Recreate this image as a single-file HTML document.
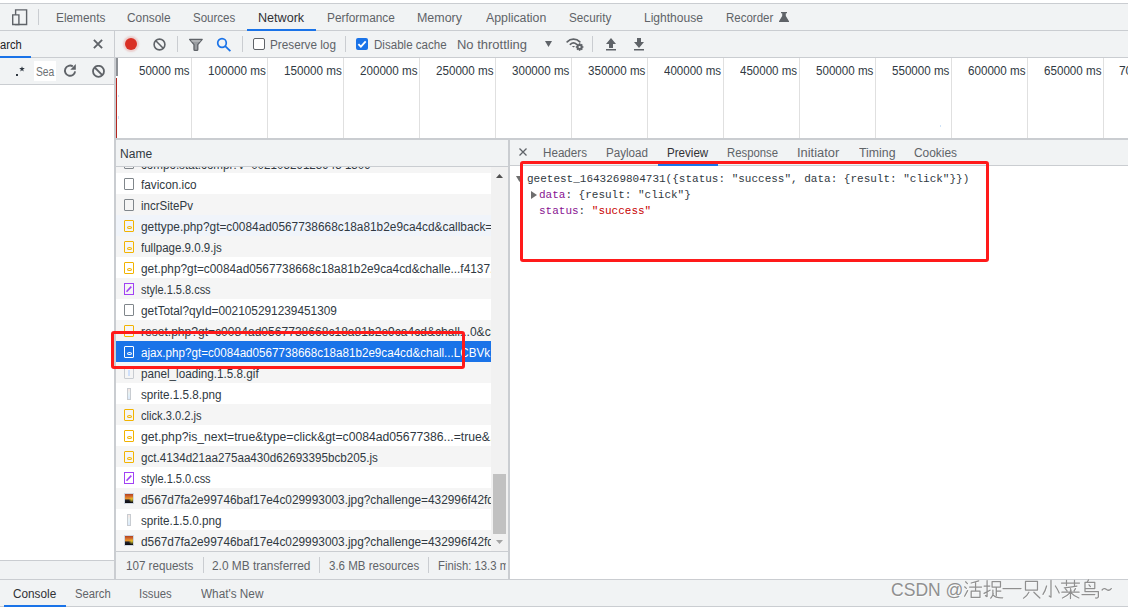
<!DOCTYPE html>
<html><head><meta charset="utf-8">
<style>
*{margin:0;padding:0;box-sizing:border-box}
html,body{width:1128px;height:608px;overflow:hidden;background:#fff;position:relative;font-family:"Liberation Sans",sans-serif;font-size:12px;color:#303942}
.a{position:absolute}
.t{position:absolute;white-space:nowrap;line-height:14px;height:14px}
.bar{background:#f1f3f4}
.vl{position:absolute;width:1px;background:#cacdd1}
.mono{font-family:"Liberation Mono",monospace;font-size:11px}
.row{position:absolute;left:0;width:375px;height:21px}
.ic{position:absolute;left:8px;top:5px;width:10px;height:12px;border:1px solid #80868b;border-radius:1px}
.ov{position:absolute;left:1.5px;top:5px;width:5px;height:3px;border:1px solid #f2b300;border-radius:50%}
.gl{position:absolute;top:58px;width:1px;height:80px;background:#e0e0e0}
</style></head><body>
<div class="a bar" style="left:0;top:3px;width:1128px;height:28px;border-top:1px solid #cacdd1;border-bottom:1px solid #cacdd1"></div>
<svg class="a" style="left:10px;top:8px" width="20" height="20" viewBox="0 0 20 20"><path d="M5.6 1.9h11v14.6h-11z" fill="none" stroke="#5f6368" stroke-width="1.4"/><path d="M2.7 6.9h6.2v9.6h-6.2z" fill="#f1f3f4" stroke="#5f6368" stroke-width="1.4"/></svg>
<div class="vl" style="left:38px;top:9px;height:16px"></div>
<div class="t" style="left:55.51px;top:11px;color:#5f6368;font-size:12px;transform:scaleX(0.9866);transform-origin:0 0;">Elements</div>
<div class="t" style="left:127.21px;top:11px;color:#5f6368;font-size:12px;transform:scaleX(0.9907);transform-origin:0 0;">Console</div>
<div class="t" style="left:192.87px;top:11px;color:#5f6368;font-size:12px;transform:scaleX(0.9605);transform-origin:0 0;">Sources</div>
<div class="t" style="left:257.65px;top:11px;color:#303134;font-size:12px;transform:scaleX(1.0488);transform-origin:0 0;">Network</div>
<div class="t" style="left:327.01px;top:11px;color:#5f6368;font-size:12px;transform:scaleX(0.9873);transform-origin:0 0;">Performance</div>
<div class="t" style="left:416.86px;top:11px;color:#5f6368;font-size:12px;transform:scaleX(1.0378);transform-origin:0 0;">Memory</div>
<div class="t" style="left:485.95px;top:11px;color:#5f6368;font-size:12px;transform:scaleX(1.0276);transform-origin:0 0;">Application</div>
<div class="t" style="left:569.06px;top:11px;color:#5f6368;font-size:12px;transform:scaleX(0.9754);transform-origin:0 0;">Security</div>
<div class="t" style="left:644.00px;top:11px;color:#5f6368;font-size:12px;transform:scaleX(1.0035);transform-origin:0 0;">Lighthouse</div>
<div class="t" style="left:726.24px;top:11px;color:#5f6368;font-size:12px;transform:scaleX(0.9574);transform-origin:0 0;">Recorder</div>
<div class="a" style="left:247px;top:29px;width:69px;height:2px;background:#1a73e8"></div>
<svg class="a" style="left:779px;top:12px" width="10" height="10" viewBox="0 0 10 10"><path d="M2 0h6v1.3h-1.2v2.6l3.2 5.3v0.8h-10v-0.8l3.2-5.3v-2.6h-1.2z" fill="#5f6368"/></svg>
<div class="a bar" style="left:0;top:31px;width:1128px;height:27px;border-bottom:1px solid #cacdd1"></div>
<div class="vl" style="left:114px;top:31px;height:27px"></div>
<div class="t" style="left:-0.46px;top:38px;color:#202124;font-size:12px;transform:scaleX(0.9297);transform-origin:0 0;">arch</div>
<div class="a" style="left:0;top:56px;width:31px;height:2px;background:#1a73e8"></div>
<svg class="a" style="left:93px;top:39px" width="10" height="10" viewBox="0 0 10 10"><path d="M0.9 0.9L9.1 9.1M9.1 0.9L0.9 9.1" stroke="#5f6368" stroke-width="1.9"/></svg>
<div class="a" style="left:125px;top:38px;width:12px;height:12px;border-radius:50%;background:#d93025;box-shadow:0 0 1.5px 2px rgba(217,48,37,.18)"></div>
<svg class="a" style="left:153px;top:38px" width="13" height="13" viewBox="0 0 13 13"><circle cx="6.5" cy="6.5" r="5.4" fill="none" stroke="#5f6368" stroke-width="1.6"/><path d="M2.8 2.8L10.2 10.2" stroke="#5f6368" stroke-width="1.6"/></svg>
<div class="vl" style="left:177px;top:36px;height:16px"></div>
<svg class="a" style="left:188px;top:38px" width="16" height="14" viewBox="0 0 16 14"><path d="M1.6 1.4h12.6l-4.4 5.3v4.8q0 .9-.9.9h-2q-.9 0-.9-.9v-4.8z" fill="#9a9da1" stroke="#5f6368" stroke-width="1.3" stroke-linejoin="round"/><path d="M3 2.6h9.8l-0.8 1h-8.2z" fill="#c4c7ca"/></svg>
<svg class="a" style="left:216px;top:37px" width="15" height="15" viewBox="0 0 15 15"><circle cx="6" cy="6" r="4.3" fill="none" stroke="#1a73e8" stroke-width="1.7"/><path d="M9.2 9.2L14.4 14.2" stroke="#1a73e8" stroke-width="1.8"/></svg>
<div class="vl" style="left:242px;top:36px;height:16px"></div>
<div class="a" style="left:253px;top:38px;width:12px;height:12px;border:1px solid #5f6368;border-radius:2px;background:#fff"></div>
<div class="t" style="left:270.32px;top:38px;color:#5f6368;font-size:12px;transform:scaleX(0.9787);transform-origin:0 0;">Preserve log</div>
<div class="vl" style="left:345px;top:36px;height:16px"></div>
<svg class="a" style="left:356px;top:38px" width="12" height="12" viewBox="0 0 12 12"><rect width="12" height="12" rx="2" fill="#1a73e8"/><path d="M2.4 6.1l2.5 2.6 4.8-5.3" fill="none" stroke="#fff" stroke-width="1.8"/></svg>
<div class="t" style="left:373.64px;top:38px;color:#5f6368;font-size:12px;transform:scaleX(0.9641);transform-origin:0 0;">Disable cache</div>
<div class="t" style="left:456.62px;top:38px;color:#5f6368;font-size:12px;transform:scaleX(1.0818);transform-origin:0 0;">No throttling</div>
<svg class="a" style="left:545px;top:41px" width="7" height="6" viewBox="0 0 7 6"><path d="M0 0h7l-3.5 6z" fill="#5f6368"/></svg>
<svg class="a" style="left:566px;top:36px" width="18" height="16" viewBox="0 0 18 16"><path d="M1.2 5.8A8.6 8.6 0 0 1 13.8 5.8" fill="none" stroke="#5f6368" stroke-width="1.7" stroke-linecap="round"/><path d="M4.3 8.3A5 5 0 0 1 10.7 8.3" fill="none" stroke="#5f6368" stroke-width="1.7" stroke-linecap="round"/><path d="M5.9 9.9h3.2L7.5 11.5z" fill="#5f6368"/><circle cx="13.6" cy="11.0" r="2.9" fill="#5f6368"/><rect x="12.80" y="7.20" width="1.6" height="7.6" transform="rotate(0 13.6 11.0)" fill="#5f6368"/><rect x="12.80" y="7.20" width="1.6" height="7.6" transform="rotate(45 13.6 11.0)" fill="#5f6368"/><rect x="12.80" y="7.20" width="1.6" height="7.6" transform="rotate(90 13.6 11.0)" fill="#5f6368"/><rect x="12.80" y="7.20" width="1.6" height="7.6" transform="rotate(135 13.6 11.0)" fill="#5f6368"/><circle cx="13.6" cy="11.0" r="1.1" fill="#f1f3f4"/></svg>
<div class="vl" style="left:592px;top:36px;height:16px"></div>
<svg class="a" style="left:605px;top:37px" width="12" height="14" viewBox="0 0 12 14"><path d="M6 1L11 7h-3v4h-4v-4h-3z" fill="#5f6368"/><rect x="1" y="12" width="10" height="1.5" fill="#5f6368"/></svg>
<svg class="a" style="left:633px;top:37px" width="12" height="14" viewBox="0 0 12 14"><path d="M6 11L11 5h-3v-4h-4v4h-3z" fill="#5f6368"/><rect x="1" y="12" width="10" height="1.5" fill="#5f6368"/></svg>
<div class="a bar" style="left:0;top:58px;width:114px;height:27px;border-bottom:1px solid #cacdd1"></div>
<div class="a" style="left:16px;top:74px;width:2px;height:2px;background:#303942"></div>
<svg class="a" style="left:19px;top:66px" width="6" height="6" viewBox="0 0 6 6"><path d="M3 0.2L3.7 2.1L5.8 2.1L4.1 3.4L4.8 5.5L3 4.2L1.2 5.5L1.9 3.4L0.2 2.1L2.3 2.1z" fill="#303942"/></svg>
<div class="a" style="left:34px;top:61px;width:22px;height:20px;background:#fff"></div>
<div class="t" style="left:35.73px;top:65px;color:#6d7175;font-size:12px;transform:scaleX(0.8585);transform-origin:0 0;">Sea</div>
<svg class="a" style="left:62px;top:63px" width="16" height="16" viewBox="0 0 16 16"><path d="M13.1 8.3A5.1 5.1 0 1 1 10.8 3.4" fill="none" stroke="#5f6368" stroke-width="1.9"/><path d="M13.8 1.1V6.8H8.3z" fill="#5f6368"/></svg>
<svg class="a" style="left:92px;top:65px" width="13" height="13" viewBox="0 0 13 13"><circle cx="6.5" cy="6.3" r="5.5" fill="none" stroke="#5f6368" stroke-width="1.8"/><path d="M2.7 2.5L10.3 10.1" stroke="#5f6368" stroke-width="1.8"/></svg>
<div class="a" style="left:114px;top:58px;height:521px;width:2px;background:#cacdd1"></div>
<div class="a bar" style="left:0;top:560px;width:114px;height:19px;border-top:1px solid #cacdd1"></div>
<div class="a" style="left:116px;top:58px;width:2px;height:18px;background:#8d9196"></div>
<div class="a" style="left:116px;top:78px;width:1px;height:60px;background:#b3261e"></div>
<div class="gl" style="left:191px"></div>
<div class="t" style="left:138.80px;top:64px;color:#303942;font-size:12px;transform:scaleX(0.9589);transform-origin:0 0;">50000 ms</div>
<div class="gl" style="left:267px"></div>
<div class="t" style="left:207.52px;top:64px;color:#303942;font-size:12px;transform:scaleX(0.9733);transform-origin:0 0;">100000 ms</div>
<div class="gl" style="left:343px"></div>
<div class="t" style="left:283.52px;top:64px;color:#303942;font-size:12px;transform:scaleX(0.9733);transform-origin:0 0;">150000 ms</div>
<div class="gl" style="left:419px"></div>
<div class="t" style="left:359.82px;top:64px;color:#303942;font-size:12px;transform:scaleX(0.9683);transform-origin:0 0;">200000 ms</div>
<div class="gl" style="left:495px"></div>
<div class="t" style="left:435.82px;top:64px;color:#303942;font-size:12px;transform:scaleX(0.9683);transform-origin:0 0;">250000 ms</div>
<div class="gl" style="left:571px"></div>
<div class="t" style="left:511.97px;top:64px;color:#303942;font-size:12px;transform:scaleX(0.9658);transform-origin:0 0;">300000 ms</div>
<div class="gl" style="left:647px"></div>
<div class="t" style="left:587.97px;top:64px;color:#303942;font-size:12px;transform:scaleX(0.9658);transform-origin:0 0;">350000 ms</div>
<div class="gl" style="left:723px"></div>
<div class="t" style="left:664.16px;top:64px;color:#303942;font-size:12px;transform:scaleX(0.9625);transform-origin:0 0;">400000 ms</div>
<div class="gl" style="left:799px"></div>
<div class="t" style="left:740.16px;top:64px;color:#303942;font-size:12px;transform:scaleX(0.9625);transform-origin:0 0;">450000 ms</div>
<div class="gl" style="left:875px"></div>
<div class="t" style="left:815.92px;top:64px;color:#303942;font-size:12px;transform:scaleX(0.9666);transform-origin:0 0;">500000 ms</div>
<div class="gl" style="left:951px"></div>
<div class="t" style="left:891.92px;top:64px;color:#303942;font-size:12px;transform:scaleX(0.9666);transform-origin:0 0;">550000 ms</div>
<div class="gl" style="left:1027px"></div>
<div class="t" style="left:967.82px;top:64px;color:#303942;font-size:12px;transform:scaleX(0.9683);transform-origin:0 0;">600000 ms</div>
<div class="gl" style="left:1103px"></div>
<div class="t" style="left:1043.82px;top:64px;color:#303942;font-size:12px;transform:scaleX(0.9683);transform-origin:0 0;">650000 ms</div>
<div class="t" style="left:1118.90px;top:64px;color:#303942;font-size:12px;">700000 ms</div>
<div class="a" style="left:116px;top:138px;width:1012px;height:2px;background:#cacdd1"></div>
<div class="a" style="left:118px;top:95px;width:1px;height:2px;background:#cfe3f8"></div>
<div class="a" style="left:118px;top:116px;width:1px;height:3px;background:#cfe3f8"></div>
<div class="a" style="left:940px;top:125px;width:1px;height:2px;background:#cfe3f8"></div>
<div class="a bar" style="left:116px;top:140px;width:392px;height:27px;border-bottom:1px solid #cacdd1"></div>
<div class="t" style="left:119.60px;top:147px;color:#303942;font-size:12px;transform:scaleX(1.0033);transform-origin:0 0;">Name</div>
<div class="a" style="left:508px;top:140px;width:2px;height:439px;background:#cacdd1"></div>
<div class="a bar" style="left:116px;top:551px;width:392px;height:28px;border-top:1px solid #cacdd1"></div>
<div class="t" style="left:126.23px;top:559px;color:#5f6368;font-size:12px;transform:scaleX(0.9684);transform-origin:0 0;">107 requests</div>
<div class="vl" style="left:203px;top:557px;height:16px"></div>
<div class="t" style="left:212.21px;top:559px;color:#5f6368;font-size:12px;transform:scaleX(0.9898);transform-origin:0 0;">2.0 MB transferred</div>
<div class="vl" style="left:319px;top:557px;height:16px"></div>
<div class="t" style="left:329.17px;top:559px;color:#5f6368;font-size:12px;transform:scaleX(0.9597);transform-origin:0 0;">3.6 MB resources</div>
<div class="vl" style="left:428px;top:557px;height:16px"></div>
<div class="a" style="left:430px;top:552px;width:76px;height:26px;overflow:hidden">
<div class="t" style="left:7.96px;top:7px;color:#5f6368;font-size:12px;transform:scaleX(0.9440);transform-origin:0 0;">Finish: 13.3 min</div>
</div>
<div class="a bar" style="left:0;top:579px;width:1128px;height:28px;border-top:1px solid #cacdd1;border-bottom:1px solid #cacdd1"></div>
<div class="t" style="left:13.21px;top:587px;color:#303134;font-size:12px;transform:scaleX(0.9814);transform-origin:0 0;">Console</div>
<div class="a" style="left:4px;top:605px;width:62px;height:2px;background:#1a73e8"></div>
<div class="t" style="left:75.18px;top:587px;color:#5f6368;font-size:12px;transform:scaleX(0.9373);transform-origin:0 0;">Search</div>
<div class="t" style="left:138.76px;top:587px;color:#5f6368;font-size:12px;transform:scaleX(0.9412);transform-origin:0 0;">Issues</div>
<div class="t" style="left:201.35px;top:587px;color:#5f6368;font-size:12px;transform:scaleX(0.9804);transform-origin:0 0;">What&#x27;s New</div>
<div class="a bar" style="left:510px;top:140px;width:618px;height:26px;border-bottom:1px solid #cacdd1"></div>
<svg class="a" style="left:519px;top:148px" width="8" height="8" viewBox="0 0 8 8"><path d="M0.5 0.5L7.5 7.5M7.5 0.5L0.5 7.5" stroke="#5f6368" stroke-width="1.3"/></svg>
<div class="t" style="left:543.23px;top:146px;color:#5f6368;font-size:12px;transform:scaleX(0.9704);transform-origin:0 0;">Headers</div>
<div class="t" style="left:605.93px;top:146px;color:#5f6368;font-size:12px;transform:scaleX(0.9688);transform-origin:0 0;">Payload</div>
<div class="t" style="left:667.03px;top:146px;color:#303134;font-size:12px;transform:scaleX(0.9664);transform-origin:0 0;">Preview</div>
<div class="t" style="left:727.06px;top:146px;color:#5f6368;font-size:12px;transform:scaleX(0.9448);transform-origin:0 0;">Response</div>
<div class="t" style="left:796.72px;top:146px;color:#5f6368;font-size:12px;transform:scaleX(1.0723);transform-origin:0 0;">Initiator</div>
<div class="t" style="left:858.74px;top:146px;color:#5f6368;font-size:12px;transform:scaleX(1.0275);transform-origin:0 0;">Timing</div>
<div class="t" style="left:913.70px;top:146px;color:#5f6368;font-size:12px;transform:scaleX(0.9929);transform-origin:0 0;">Cookies</div>
<div class="a" style="left:658px;top:164px;width:60px;height:2px;background:#1a73e8"></div>
<div class="a" style="left:116px;top:167px;width:375px;height:384px;overflow:hidden">
<div class="row" style="top:-15px;background:#f5f5f5"><div class="ic" style="border-color:#80868b"></div>
<div class="t" style="left:24.82px;top:6px;color:#303942;font-size:12px;transform:scaleX(0.9687);transform-origin:0 0;">compo.stat.compl?v=00210529123945 1309</div>
</div>
<div class="row" style="top:6px;background:#fff"><div class="ic" style="border-color:#80868b"></div>
<div class="t" style="left:25.15px;top:5px;color:#303942;font-size:12px;transform:scaleX(0.9813);transform-origin:0 0;">favicon.ico</div>
</div>
<div class="row" style="top:27px;background:#f5f5f5"><div class="ic" style="border-color:#80868b"></div>
<div class="t" style="left:24.53px;top:5px;color:#303942;font-size:12px;transform:scaleX(0.9614);transform-origin:0 0;">incrSitePv</div>
</div>
<div class="row" style="top:48px;background:#f0f4fa"><div class="ic" style="border-color:#f2b300"><i class="ov"></i></div>
<div class="t" style="left:24.81px;top:5px;color:#303942;font-size:12px;transform:scaleX(0.9877);transform-origin:0 0;">gettype.php?gt=c0084ad0567738668c18a81b2e9ca4cd&amp;callback=</div>
</div>
<div class="row" style="top:69px;background:#f5f5f5"><div class="ic" style="border-color:#f2b300"><i class="ov"></i></div>
<div class="t" style="left:25.16px;top:5px;color:#303942;font-size:12px;transform:scaleX(0.9611);transform-origin:0 0;">fullpage.9.0.9.js</div>
</div>
<div class="row" style="top:90px;background:#fff"><div class="ic" style="border-color:#f2b300"><i class="ov"></i></div>
<div class="t" style="left:24.81px;top:5px;color:#303942;font-size:12px;transform:scaleX(0.9858);transform-origin:0 0;">get.php?gt=c0084ad0567738668c18a81b2e9ca4cd&amp;challe...f4137.</div>
</div>
<div class="row" style="top:111px;background:#f5f5f5"><svg class="a" style="left:8px;top:5px" width="10" height="12" viewBox="0 0 10 12"><rect x="0.5" y="0.5" width="9" height="11" fill="none" stroke="#a142f4"/><path d="M2.5 8.8L7.3 3.6" stroke="#a142f4" stroke-width="1.6"/></svg>
<div class="t" style="left:24.98px;top:5px;color:#303942;font-size:12px;transform:scaleX(0.9156);transform-origin:0 0;">style.1.5.8.css</div>
</div>
<div class="row" style="top:132px;background:#fff"><div class="ic" style="border-color:#80868b"></div>
<div class="t" style="left:24.81px;top:5px;color:#303942;font-size:12px;transform:scaleX(0.9871);transform-origin:0 0;">getTotal?qyId=002105291239451309</div>
</div>
<div class="row" style="top:153px;background:#f5f5f5"><div class="ic" style="border-color:#f2b300"><i class="ov"></i></div>
<div class="t" style="left:24.50px;top:5px;color:#303942;font-size:12px;transform:scaleX(1.0049);transform-origin:0 0;">reset.php?gt=c0084ad0567738668c18a81b2e9ca4cd&amp;chall...0&amp;cl</div>
</div>
<div class="row" style="top:174px;background:#1a73e8"><div class="ic" style="border-color:#fff"><i class="ov" style="border-color:#fff"></i></div>
<div class="t" style="left:24.82px;top:5px;color:#fff;font-size:12px;transform:scaleX(0.9695);transform-origin:0 0;">ajax.php?gt=c0084ad0567738668c18a81b2e9ca4cd&amp;chall...LCBVk.</div>
</div>
<div class="row" style="top:195px;background:#f5f5f5"><div class="ic" style="border-color:#c8ccd1"><i class="a" style="left:3px;top:2px;width:2px;height:6px;background:#cfe0fb"></i></div>
<div class="t" style="left:24.57px;top:5px;color:#303942;font-size:12px;transform:scaleX(0.9746);transform-origin:0 0;">panel_loading.1.5.8.gif</div>
</div>
<div class="row" style="top:216px;background:#fff"><div class="a" style="left:11px;top:5px;width:4px;height:12px;border:1px solid #c8ccd1;background:linear-gradient(#f6e7e3,#e6f3f6,#dbe8fb)"></div>
<div class="t" style="left:24.96px;top:5px;color:#303942;font-size:12px;transform:scaleX(0.9730);transform-origin:0 0;">sprite.1.5.8.png</div>
</div>
<div class="row" style="top:237px;background:#f5f5f5"><div class="ic" style="border-color:#f2b300"><i class="ov"></i></div>
<div class="t" style="left:24.84px;top:5px;color:#303942;font-size:12px;transform:scaleX(0.9270);transform-origin:0 0;">click.3.0.2.js</div>
</div>
<div class="row" style="top:258px;background:#fff"><div class="ic" style="border-color:#f2b300"><i class="ov"></i></div>
<div class="t" style="left:24.79px;top:5px;color:#303942;font-size:12px;transform:scaleX(1.0155);transform-origin:0 0;">get.php?is_next=true&amp;type=click&amp;gt=c0084ad05677386...=true&amp;.</div>
</div>
<div class="row" style="top:279px;background:#f5f5f5"><div class="ic" style="border-color:#f2b300"><i class="ov"></i></div>
<div class="t" style="left:24.82px;top:5px;color:#303942;font-size:12px;transform:scaleX(0.9696);transform-origin:0 0;">gct.4134d21aa275aa430d62693395bcb205.js</div>
</div>
<div class="row" style="top:300px;background:#fff"><svg class="a" style="left:8px;top:5px" width="10" height="12" viewBox="0 0 10 12"><rect x="0.5" y="0.5" width="9" height="11" fill="none" stroke="#a142f4"/><path d="M2.5 8.8L7.3 3.6" stroke="#a142f4" stroke-width="1.6"/></svg>
<div class="t" style="left:24.98px;top:5px;color:#303942;font-size:12px;transform:scaleX(0.9156);transform-origin:0 0;">style.1.5.0.css</div>
</div>
<div class="row" style="top:321px;background:#f5f5f5"><div class="a" style="left:8px;top:5px;width:10px;height:11px;border:1px solid #cfd6e0;background:radial-gradient(circle at 85% 62%,rgba(220,200,40,.9) 0,rgba(220,200,40,0) 35%),linear-gradient(#b04020 0,#d8702c 30%,#e8962e 52%,#20202a 68%,#0a0a10 100%)"></div>
<div class="t" style="left:24.81px;top:5px;color:#303942;font-size:12px;transform:scaleX(0.9876);transform-origin:0 0;">d567d7fa2e99746baf17e4c029993003.jpg?challenge=432996f42fd</div>
</div>
<div class="row" style="top:342px;background:#fff"><div class="a" style="left:11px;top:5px;width:4px;height:12px;border:1px solid #c8ccd1;background:linear-gradient(#f6e7e3,#e6f3f6,#dbe8fb)"></div>
<div class="t" style="left:24.96px;top:5px;color:#303942;font-size:12px;transform:scaleX(0.9730);transform-origin:0 0;">sprite.1.5.0.png</div>
</div>
<div class="row" style="top:363px;background:#f5f5f5"><div class="a" style="left:8px;top:5px;width:10px;height:11px;border:1px solid #cfd6e0;background:radial-gradient(circle at 85% 62%,rgba(220,200,40,.9) 0,rgba(220,200,40,0) 35%),linear-gradient(#b04020 0,#d8702c 30%,#e8962e 52%,#20202a 68%,#0a0a10 100%)"></div>
<div class="t" style="left:24.81px;top:5px;color:#303942;font-size:12px;transform:scaleX(0.9876);transform-origin:0 0;">d567d7fa2e99746baf17e4c029993003.jpg?challenge=432996f42fd</div>
</div>
</div>
<div class="a" style="left:491px;top:167px;width:17px;height:384px;background:#f1f1f1"></div>
<svg class="a" style="left:496px;top:174px" width="7" height="4" viewBox="0 0 7 4"><path d="M0 4h7L3.5 0z" fill="#505050"/></svg>
<div class="a" style="left:493px;top:474px;width:13px;height:60px;background:#c1c1c1"></div>
<svg class="a" style="left:496px;top:540px" width="7" height="4" viewBox="0 0 7 4"><path d="M0 0h7L3.5 4z" fill="#a3a3a3"/></svg>
<div class="a mono" style="left:516px;top:171px;line-height:16px;color:#303942;white-space:pre">
<svg class="a" style="left:0;top:5px" width="7" height="7" viewBox="0 0 7 7"><path d="M0 0h7L3.5 6z" fill="#6e6e6e"/></svg><div style="position:absolute;left:11px;top:0">geetest_1643269804731({status: "success", data: {result: "click"}})</div>
<svg class="a" style="left:15px;top:20px" width="6" height="8" viewBox="0 0 6 8"><path d="M0 0v8L6 4z" fill="#6e6e6e"/></svg><div style="position:absolute;left:23px;top:16px"><span style="color:#881391">data</span>: {result: "click"}</div>
<div style="position:absolute;left:23px;top:32px"><span style="color:#881391">status</span>: <span style="color:#c80000">"success"</span></div>
</div>
<div class="t" style="left:890.5px;top:581px;font-size:18.3px;line-height:18px;height:18px;color:#8f8f8f;text-shadow:0.6px 0.6px 0 rgba(255,255,255,.85);transform:scaleX(0.96);transform-origin:0 0">CSDN @</div>
<svg class="a" style="left:960px;top:578px" width="160" height="24" viewBox="0 0 160 24"><path transform="translate(3.60 1.6)" d="M2.6 2.8L4.4 4.6 M1.6 7.8L3.4 9.4 M1.6 17.2L4.6 11.6 M15.8 1.8L8.2 4 M6.6 8H18.6 M12.6 3.6V12.2 M8.2 12.2H17V18.4H8.2Z" fill="none" stroke="rgba(255,255,255,0.85)" stroke-width="1.2" stroke-linecap="round" stroke-linejoin="round"/><path transform="translate(24.10 1.6)" d="M0.6 7H6.4 M3.6 1.6V17.6L2 16.6 M0.6 14.4L6.6 11.2 M8.6 2.6H17V8H8.6Z M12.8 8V16.6 M12.8 12H17.4 M9.4 11V16.4 M9.8 14.6Q8.6 18 7.2 19.2 M9.8 16.2Q12 19.2 19.2 18.8" fill="none" stroke="rgba(255,255,255,0.85)" stroke-width="1.2" stroke-linecap="round" stroke-linejoin="round"/><path transform="translate(42.60 1.6)" d="M1 9.6H19" fill="none" stroke="rgba(255,255,255,0.85)" stroke-width="1.2" stroke-linecap="round" stroke-linejoin="round"/><path transform="translate(62.10 1.6)" d="M4 2.4H16V11H4Z M7.4 13.2Q5.6 17 2 19.2 M12.4 13.2Q15.6 16.4 18.4 19" fill="none" stroke="rgba(255,255,255,0.85)" stroke-width="1.2" stroke-linecap="round" stroke-linejoin="round"/><path transform="translate(81.60 1.6)" d="M10 1.4V18.2L8.2 17 M5.6 7Q4.4 11.8 2 15.4 M14.4 7Q16.8 10.6 18.2 14" fill="none" stroke="rgba(255,255,255,0.85)" stroke-width="1.2" stroke-linecap="round" stroke-linejoin="round"/><path transform="translate(101.10 1.6)" d="M1 4H19 M6 1.4V6.6 M14 1.4V6.6 M16.4 7.2Q10 8.6 3.8 8.8 M5 9.8L6.6 11.8 M10 9.6L10.6 11.8 M15 9.6L13.6 11.8 M1.4 13.2H18.6 M10 11.4V19.6 M9.6 13.6Q6 17.6 2 19 M10.4 13.6Q14 17.6 18.4 19" fill="none" stroke="rgba(255,255,255,0.85)" stroke-width="1.2" stroke-linecap="round" stroke-linejoin="round"/><path transform="translate(120.60 1.6)" d="M8.6 0.8L7.2 3 M5 3.4H14.8V9.6 M5 3.4V12.6 M9 5.8L10.4 7.6 M5 9.6H14.8 M5 12.6H18.4V17.8Q18 19.4 15.6 19 M2 15.6H14.8" fill="none" stroke="rgba(255,255,255,0.85)" stroke-width="1.2" stroke-linecap="round" stroke-linejoin="round"/><path transform="translate(141.10 1.6)" d="M1.6 11Q3.6 8.4 6 10.4Q8.6 12.4 10.8 9.6" fill="none" stroke="rgba(255,255,255,0.85)" stroke-width="1.2" stroke-linecap="round" stroke-linejoin="round"/><path transform="translate(3.00 1)" d="M2.6 2.8L4.4 4.6 M1.6 7.8L3.4 9.4 M1.6 17.2L4.6 11.6 M15.8 1.8L8.2 4 M6.6 8H18.6 M12.6 3.6V12.2 M8.2 12.2H17V18.4H8.2Z" fill="none" stroke="#8f8f8f" stroke-width="1.25" stroke-linecap="round" stroke-linejoin="round"/><path transform="translate(23.50 1)" d="M0.6 7H6.4 M3.6 1.6V17.6L2 16.6 M0.6 14.4L6.6 11.2 M8.6 2.6H17V8H8.6Z M12.8 8V16.6 M12.8 12H17.4 M9.4 11V16.4 M9.8 14.6Q8.6 18 7.2 19.2 M9.8 16.2Q12 19.2 19.2 18.8" fill="none" stroke="#8f8f8f" stroke-width="1.25" stroke-linecap="round" stroke-linejoin="round"/><path transform="translate(42.00 1)" d="M1 9.6H19" fill="none" stroke="#8f8f8f" stroke-width="1.25" stroke-linecap="round" stroke-linejoin="round"/><path transform="translate(61.50 1)" d="M4 2.4H16V11H4Z M7.4 13.2Q5.6 17 2 19.2 M12.4 13.2Q15.6 16.4 18.4 19" fill="none" stroke="#8f8f8f" stroke-width="1.25" stroke-linecap="round" stroke-linejoin="round"/><path transform="translate(81.00 1)" d="M10 1.4V18.2L8.2 17 M5.6 7Q4.4 11.8 2 15.4 M14.4 7Q16.8 10.6 18.2 14" fill="none" stroke="#8f8f8f" stroke-width="1.25" stroke-linecap="round" stroke-linejoin="round"/><path transform="translate(100.50 1)" d="M1 4H19 M6 1.4V6.6 M14 1.4V6.6 M16.4 7.2Q10 8.6 3.8 8.8 M5 9.8L6.6 11.8 M10 9.6L10.6 11.8 M15 9.6L13.6 11.8 M1.4 13.2H18.6 M10 11.4V19.6 M9.6 13.6Q6 17.6 2 19 M10.4 13.6Q14 17.6 18.4 19" fill="none" stroke="#8f8f8f" stroke-width="1.25" stroke-linecap="round" stroke-linejoin="round"/><path transform="translate(120.00 1)" d="M8.6 0.8L7.2 3 M5 3.4H14.8V9.6 M5 3.4V12.6 M9 5.8L10.4 7.6 M5 9.6H14.8 M5 12.6H18.4V17.8Q18 19.4 15.6 19 M2 15.6H14.8" fill="none" stroke="#8f8f8f" stroke-width="1.25" stroke-linecap="round" stroke-linejoin="round"/><path transform="translate(140.50 1)" d="M1.6 11Q3.6 8.4 6 10.4Q8.6 12.4 10.8 9.6" fill="none" stroke="#8f8f8f" stroke-width="1.25" stroke-linecap="round" stroke-linejoin="round"/></svg>
<div class="a" style="left:520px;top:161px;width:469px;height:101px;border:3px solid #ff1a1a;border-radius:3px"></div>
<div class="a" style="left:111px;top:331px;width:354px;height:38px;border:3px solid #ff1a1a;border-radius:3px"></div>
</body></html>
